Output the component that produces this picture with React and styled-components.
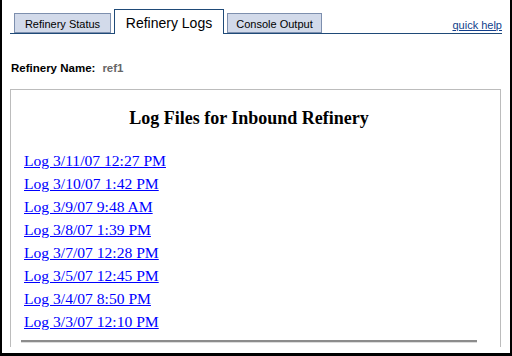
import React from 'react'
import styled, { createGlobalStyle } from 'styled-components';

const GlobalStyle = createGlobalStyle`
  html, body {
    margin: 0;
    padding: 0;
    background: #ffffff;
  }
`;

const Frame = styled.div`
  box-sizing: border-box;
  height: 356px;
  border-left: 2px solid #000;
  border-right: 2px solid #000;
  border-bottom: 3px solid #000;
  background: #fff;
  overflow: hidden;
  font-family: "Liberation Sans", Arial, sans-serif;
`;

const TabBar = styled.div`
  display: flex;
  align-items: flex-end;
  margin: 0 8px;
  padding: 9px 0 0 4px;
  border-bottom: 1px solid #1f4a78;
`;

const Tab = styled.div`
  box-sizing: border-box;
  display: flex;
  align-items: center;
  justify-content: center;
  margin-right: 3px;
  padding-top: 1px;
  color: #000;
  height: ${({ active }) => (active ? "25px" : "20px")};
  width: ${({ w }) => w}px;
  margin-bottom: ${({ active }) => (active ? "-1px" : "0")};
  font-size: ${({ active }) => (active ? "14px" : "11px")};
  background: ${({ active }) => (active ? "#ffffff" : "#d2daea")};
  border: 1px solid ${({ active }) => (active ? "#1f4a78" : "#7d8fae")};
  border-bottom: ${({ active }) => (active ? "none" : "1px solid #7d8fae")};
  cursor: pointer;
`;

const HelpLink = styled.a`
  margin-left: auto;
  margin-bottom: 1px;
  font-size: 11px;
  color: #123f8c;
  text-decoration: underline;
  line-height: 13px;
`;

const NameRow = styled.div`
  margin: 28px 0 0 9px;
  font-size: 11.5px;
  line-height: 13px;
  font-weight: bold;
  color: #000;
`;

const NameValue = styled.span`
  color: #666666;
  margin-left: 7px;
`;

const LogBox = styled.div`
  box-sizing: border-box;
  margin: 14px 9px 0 8px;
  height: 258px;
  border: 1px solid #bcbcbc;
  border-bottom: none;
  padding: 18px 23px 0 10px;
`;

const Heading = styled.h2`
  margin: 0 0 21px;
  font-family: "Liberation Serif", "Times New Roman", serif;
  font-size: 18px;
  line-height: 20px;
  font-weight: bold;
  text-align: center;
  color: #000;
`;

const LogList = styled.div`
  display: flex;
  flex-direction: column;
  align-items: flex-start;
  padding-left: 3px;
`;

const LogLink = styled.a`
  font-family: "Liberation Serif", "Times New Roman", serif;
  font-size: 15.6px;
  line-height: 23px;
  color: #0000ff;
  text-decoration: underline;
`;

const Rule = styled.hr`
  margin: 7px 0 0;
  height: 0;
  border: none;
  border-top: 2px solid #8c8c8c;
  border-bottom: 1px solid #dcdcdc;
`;

const tabs = [
  { label: "Refinery Status", w: 97 },
  { label: "Refinery Logs", w: 110, active: true },
  { label: "Console Output", w: 95 },
];

const logs = [
  "Log 3/11/07 12:27 PM",
  "Log 3/10/07 1:42 PM",
  "Log 3/9/07 9:48 AM",
  "Log 3/8/07 1:39 PM",
  "Log 3/7/07 12:28 PM",
  "Log 3/5/07 12:45 PM",
  "Log 3/4/07 8:50 PM",
  "Log 3/3/07 12:10 PM",
];

const App = () => {
  return (
    <Frame>
      <GlobalStyle />
      <TabBar>
        {tabs.map((t) => (
          <Tab key={t.label} w={t.w} active={t.active}>{t.label}</Tab>
        ))}
        <HelpLink href="#">quick help</HelpLink>
      </TabBar>
      <NameRow>
        Refinery Name:<NameValue>ref1</NameValue>
      </NameRow>
      <LogBox>
        <Heading>Log Files for Inbound Refinery</Heading>
        <LogList>
          {logs.map((l) => (
            <LogLink key={l} href="#">{l}</LogLink>
          ))}
        </LogList>
        <Rule />
      </LogBox>
    </Frame>
  )
}

export default App
